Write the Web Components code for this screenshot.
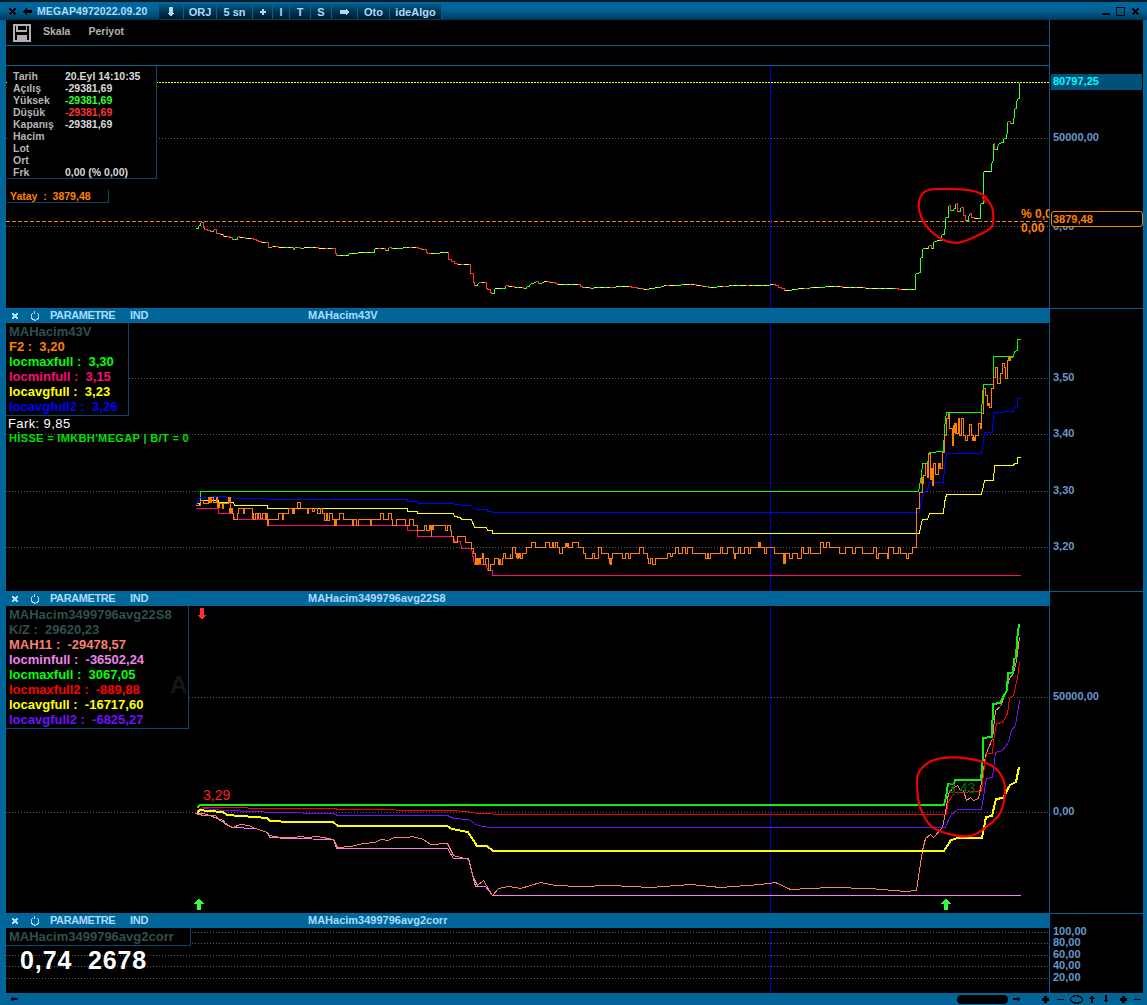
<!DOCTYPE html>
<html lang="tr"><head><meta charset="utf-8"><title>MEGAP</title>
<style>html,body{margin:0;padding:0;background:#000}</style></head>
<body>
<app-window>
  <win-titlebar slot="title" label="MEGAP4972022.09.20">
    <tool-btn w="25"><ui-icon name="down" size="10"></ui-icon></tool-btn>
    <tool-btn w="33">ORJ</tool-btn>
    <tool-btn w="36">5 sn</tool-btn>
    <tool-btn w="20"><ui-icon name="plus" size="8"></ui-icon></tool-btn>
    <tool-btn w="17">I</tool-btn>
    <tool-btn w="21">T</tool-btn>
    <tool-btn w="21">S</tool-btn>
    <tool-btn w="26"><ui-icon name="right" size="10"></ui-icon></tool-btn>
    <tool-btn w="32">Oto</tool-btn>
    <tool-btn w="52">ideAlgo</tool-btn>
  </win-titlebar>

  <chart-pane h="288" first>
    <pane-toolbar slot="head"></pane-toolbar>
    <chart-plot name="p1" view="6 66 1043 242"></chart-plot>
    <ohlc-box>
      <span>Tarih</span><span>20.Eyl 14:10:35</span>
      <span>Açılış</span><span>-29381,69</span>
      <span>Yüksek</span><span style="color:#33ff33">-29381,69</span>
      <span>Düşük</span><span style="color:#ff3333">-29381,69</span>
      <span>Kapanış</span><span>-29381,69</span>
      <span>Hacim</span><span></span>
      <span>Lot</span><span></span>
      <span>Ort</span><span></span>
      <span>Frk</span><span>0,00 (% 0,00)</span>
    </ohlc-box>
    <yatay-box>Yatay  :  3879,48</yatay-box>
    <chart-note style="left:1015px;top:141px;color:#ff8000;font-size:12px;font-weight:700;width:28px;overflow:hidden">% 0,00</chart-note>
    <chart-note style="left:1015px;top:155px;color:#ff8000;font-size:12px;font-weight:700">0,00</chart-note>
    <axis-label slot="axis" style="top:110px">50000,00</axis-label>
    <axis-label slot="axis" style="top:199px">0,00</axis-label>
    <axis-label slot="axis" kind="now" style="top:54px">80797,25</axis-label>
    <axis-label slot="axis" kind="tag" style="top:191px">3879,48</axis-label>
  </chart-pane>

  <chart-pane h="283">
    <pane-header slot="head" title-text="MAHacim43V"></pane-header>
    <chart-plot name="p2" view="6 323 1043 268"></chart-plot>
    <chart-legend style="width:122px;height:92px">
      <legend-row style="color:#2f4f4f">MAHacim43V</legend-row>
      <legend-row style="color:#ff8000">F2 :  3,20</legend-row>
      <legend-row style="color:#00ff00">locmaxfull :  3,30</legend-row>
      <legend-row style="color:#ff0a78">locminfull :  3,15</legend-row>
      <legend-row style="color:#ffff00">locavgfull :  3,23</legend-row>
      <legend-row style="color:#0000ff">locavgfull2 :  3,26</legend-row>
    </chart-legend>
    <chart-note style="left:2px;top:94px;color:#fff;font-size:13px;letter-spacing:.4px">Fark: 9,85</chart-note>
    <chart-note style="left:3px;top:108px;color:#00e000;font-size:11px;font-weight:700;letter-spacing:.35px">HİSSE = IMKBH'MEGAP | B/T = 0</chart-note>
    <axis-label slot="axis" style="top:61px">3,50</axis-label>
    <axis-label slot="axis" style="top:117px">3,40</axis-label>
    <axis-label slot="axis" style="top:174px">3,30</axis-label>
    <axis-label slot="axis" style="top:230px">3,20</axis-label>
  </chart-pane>

  <chart-pane h="322">
    <pane-header slot="head" title-text="MAHacim3499796avg22S8"></pane-header>
    <chart-plot name="p3" view="6 606 1043 307"></chart-plot>
    <chart-legend style="width:182px;height:122px">
      <legend-row style="color:#2f4f4f">MAHacim3499796avg22S8</legend-row>
      <legend-row style="color:#2f4f4f">K/Z :  29620,23</legend-row>
      <legend-row style="color:#fa8072">MAH11 :  -29478,57</legend-row>
      <legend-row style="color:#ee82ee">locminfull :  -36502,24</legend-row>
      <legend-row style="color:#00ff00">locmaxfull :  3067,05</legend-row>
      <legend-row style="color:#ff0000">locmaxfull2 :  -889,88</legend-row>
      <legend-row style="color:#ffff00">locavgfull :  -16717,60</legend-row>
      <legend-row style="color:#7010ff">locavgfull2 :  -6825,27</legend-row>
    </chart-legend>
    <chart-note style="left:164px;top:72px;color:#161616;font-size:24px;font-weight:700">A</chart-note>
    <chart-note style="left:197px;top:182px;color:#ff2020;font-size:14px">3,29</chart-note>
    <chart-note style="left:942px;top:175px;color:#007000;font-size:14px">3,43</chart-note>
    <chart-note style="left:190px;top:2px;color:#ff3030"><ui-icon name="down" size="12"></ui-icon></chart-note>
    <chart-note style="left:187px;top:292px;color:#33ff44"><ui-icon name="up" size="12"></ui-icon></chart-note>
    <chart-note style="left:934px;top:292px;color:#33ff44"><ui-icon name="up" size="12"></ui-icon></chart-note>
    <axis-label slot="axis" style="top:97px">50000,00</axis-label>
    <axis-label slot="axis" style="top:212px">0,00</axis-label>
  </chart-pane>

  <chart-pane h="80">
    <pane-header slot="head" title-text="MAHacim3499796avg2corr"></pane-header>
    <chart-plot name="p4" view="6 928 1043 65"></chart-plot>
    <chart-legend style="width:184px;height:17px">
      <legend-row style="color:#2f4f4f">MAHacim3499796avg2corr</legend-row>
    </chart-legend>
    <chart-note style="left:14px;top:18px;color:#fff;font-size:25px;font-weight:700;line-height:28px;letter-spacing:.9px">0,74  2678</chart-note>
    <axis-label slot="axis" style="top:10px">100,00</axis-label>
    <axis-label slot="axis" style="top:21px">80,00</axis-label>
    <axis-label slot="axis" style="top:33px">60,00</axis-label>
    <axis-label slot="axis" style="top:44px">40,00</axis-label>
    <axis-label slot="axis" style="top:56px">20,00</axis-label>
  </chart-pane>

  <status-bar slot="status"></status-bar>
</app-window>

<script>
const FONT = '"Liberation Sans",Arial,sans-serif';
const ICONS = {
  x:'<path d="M2 2 10 10M10 2 2 10" stroke="currentColor" stroke-width="2.6" fill="none"/>',
  left:'<path d="M0 6 5 1.5V4H12V8H5V10.5Z" fill="currentColor"/>',
  right:'<path d="M12 6 7 1.5V4H0V8H7V10.5Z" fill="currentColor"/>',
  down:'<path d="M6 12 1.5 7H4V0H8V7H10.5Z" fill="currentColor"/>',
  up:'<path d="M6 0 1 5.5H4V12H8V5.5H11Z" fill="currentColor"/>',
  plus:'<path d="M6 1V11M1 6H11" stroke="currentColor" stroke-width="3" fill="none"/>',
  minus:'<path d="M1 6H11" stroke="currentColor" stroke-width="2.4" fill="none"/>',
  refresh:'<path d="M4.2 2.2A4.6 4.6 0 1 0 8 2.2M5 .6 5.6 3.4" stroke="currentColor" stroke-width="1.3" fill="none"/>',
  min:'<path d="M0 10.5H12" stroke="currentColor" stroke-width="2.6" fill="none"/>',
  max:'<path d="M.7 .7H11.3V11.3H.7Z" stroke="currentColor" stroke-width="1.4" fill="none"/>',
  oval:'<ellipse cx="6" cy="6" rx="5.4" ry="3.4" stroke="currentColor" stroke-width="1.1" fill="none"/>',
  save:'<path d="M.6.6H11.4V11.4H.6Z" fill="none" stroke="currentColor" stroke-width="1.1"/><path d="M2.6.6V4.6H9V.6" fill="none" stroke="currentColor" stroke-width="1"/><path d="M2.6 7H9.4V11H2.6Z" fill="currentColor"/>',
};
function def(tag, css, html, init){
  customElements.define(tag, class extends HTMLElement{
    constructor(){super();this.attachShadow({mode:'open'}).innerHTML='<style>'+css+'</style>'+html;}
    connectedCallback(){init&&init(this,this.shadowRoot);}
  });
}
def('ui-icon',':host{display:inline-flex;line-height:0}svg{display:block}','<svg viewBox="0 0 12 12" shape-rendering="crispEdges"></svg>',(h,s)=>{
  const n=+h.getAttribute('size')||12,v=s.querySelector('svg');
  v.setAttribute('width',n);v.setAttribute('height',n);v.innerHTML=ICONS[h.getAttribute('name')];
});
def('app-window',
 `:host{display:flex;flex-direction:column;width:1147px;height:1005px;background:#006699;font-family:${FONT};overflow:hidden}
  .body{display:flex;flex-direction:column;padding:0 4px 0 6px}`,
 '<slot name="title"></slot><div class="body"><slot></slot></div><slot name="status"></slot>');
def('win-titlebar',
 `:host{display:flex;align-items:stretch;height:20px;box-sizing:border-box;border-top:2px solid #001a2a;padding-left:8px;color:#000;
    background:linear-gradient(#00679c,#006396 45%,#00385a)}
  .ic{display:flex;align-items:center;gap:6px;width:29px;flex:none}
  .t{width:122px;flex:none;font:700 10.5px/16px ${FONT};color:#a8dcff;letter-spacing:.1px;display:flex;align-items:center}
  .bs{display:flex;margin-top:2px;height:15px}
  .r{margin-left:auto;display:flex;align-items:center;gap:6px;padding-right:7px}`,
 `<div class="ic"><ui-icon name="x" size="9"></ui-icon><ui-icon name="left" size="9"></ui-icon></div>
  <div class="t"></div><div class="bs"><slot></slot></div>
  <div class="r"><ui-icon name="min" size="8"></ui-icon><ui-icon name="max" size="9"></ui-icon><ui-icon name="x" size="9"></ui-icon></div>`,
 (h,s)=>{s.querySelector('.t').textContent=h.getAttribute('label');});
def('tool-btn',
 `:host{display:flex;align-items:center;justify-content:center;box-sizing:border-box;flex:none;color:#a8dcff;
    font:700 11px/14px ${FONT};border-right:1px solid #00608f;background:linear-gradient(#005a88,#00263c 75%,#001c2c)}`,
 '<slot></slot>',(h)=>{h.style.width=h.getAttribute('w')+'px';});
def('chart-pane',
 `:host{display:grid;grid-template-columns:1043px 94px;background:#000}
  .m{display:flex;flex-direction:column;min-height:0}
  .p{position:relative;flex:1;min-height:0;overflow:hidden;background:#000}
  .a{position:relative;border-left:1px solid #00608f;border-top:1px solid #00608f;overflow:hidden}
  :host([first]) .a{border-top:0}`,
 '<div class="m"><slot name="head"></slot><div class="p"><slot></slot></div></div><div class="a"><slot name="axis"></slot></div>',
 (h)=>{h.style.height=h.getAttribute('h')+'px';});
def('pane-toolbar',
 `:host{display:block;color:#b0b0b0;font:700 10.5px/14px ${FONT}}
  .r1{height:25px;display:flex;align-items:center;border-bottom:1px solid #00608f;padding-left:7px}
  .r1 span{position:relative;top:-2px;margin-left:12px;margin-right:6px}
  .r2{height:19px;border-bottom:1px solid #00608f}`,
 '<div class="r1"><ui-icon name="save" size="18"></ui-icon><span>Skala</span><span>Periyot</span></div><div class="r2"></div>');
def('pane-header',
 `:host{display:flex;align-items:center;height:15px;background:#006699;color:#a8dcff;font:700 11px/15px ${FONT}}
  .x{margin-left:5px;width:19px;display:flex}.o{width:20px;display:flex}
  .a{width:80px;letter-spacing:-.4px}.b{width:178px;letter-spacing:-.3px}`,
 `<div class="x"><ui-icon name="x" size="8"></ui-icon></div><div class="o"><ui-icon name="refresh" size="10"></ui-icon></div>
  <div class="a">PARAMETRE</div><div class="b">IND</div><div class="t"></div>`,
 (h,s)=>{s.querySelector('.t').textContent=h.getAttribute('title-text');});
def('chart-legend',
 `:host{position:absolute;left:0;top:0;box-sizing:content-box;background:#000;border-right:1px solid #004a6e;border-bottom:1px solid #004a6e;display:flex;flex-direction:column}
  slot{display:block}`,'<slot></slot>');
def('legend-row',
 `:host{display:block;height:15px;padding-left:3px;font:700 13px/17px ${FONT};white-space:pre}`,'<slot></slot>');
def('chart-note',
 `:host{position:absolute;white-space:pre;font-family:${FONT};line-height:14px;z-index:2}`,'<slot></slot>');
def('ohlc-box',
 `:host{position:absolute;left:1px;top:0;width:150px;height:113px;box-sizing:border-box;background:#000;
    border-right:1px solid #004a6e;border-bottom:1px solid #004a6e;padding:4px 0 0 6px;
    display:grid;grid-template-columns:52px 1fr;grid-auto-rows:12px;color:#b4b4b4;font:700 10.5px/12px ${FONT};z-index:1}
  ::slotted(span:nth-child(even)){color:#d8d8d8}`,'<slot></slot>');
def('yatay-box',
 `:host{position:absolute;left:1px;top:124px;width:102px;height:13px;box-sizing:border-box;color:#ff8000;
    border-right:1px solid #004a6e;border-bottom:1px solid #004a6e;padding-left:3px;font:700 10.5px/12px ${FONT};white-space:pre;z-index:1;background:#000}`,'<slot></slot>');
def('axis-label',
 `:host{position:absolute;left:3px;right:1px;color:#6699cc;font:700 11px/14px ${FONT};white-space:pre}
  :host([kind=now]){color:#00ffff;background:#005078;height:16px;line-height:15px;left:1px;padding-left:2px}
  :host([kind=tag]){color:#ff8000;background:#000;border:1px solid #ff8000;border-radius:3px;height:14px;line-height:14px;left:1px;right:0;padding-left:1px}`,'<slot></slot>');
def('status-bar',
 `:host{display:flex;align-items:center;height:12px;background:#006699;color:#000;padding-left:10px}
  .g{margin-left:auto;display:flex;align-items:center}
  .pill{width:51px;height:9px;border-radius:5px;background:#000;margin-right:5px}`,
 `<ui-icon name="left" size="8"></ui-icon><div class="g"><div class="pill"></div>
  <ui-icon name="right" size="8" style="margin-right:20px"></ui-icon>
  <ui-icon name="plus" size="9" style="margin-right:6px"></ui-icon>
  <ui-icon name="minus" size="9" style="margin-right:5px"></ui-icon>
  <ui-icon name="oval" size="13" style="margin-right:5px"></ui-icon>
  <ui-icon name="up" size="8" style="margin-right:6px"></ui-icon>
  <ui-icon name="down" size="8" style="margin-right:9px"></ui-icon>
  <ui-icon name="plus" size="9" style="margin-right:5px"></ui-icon>
  <ui-icon name="minus" size="9" style="margin-right:5px"></ui-icon></div>`);

/* ---- chart data: coordinates read from zoomed crops (origin + value/3) ---- */
const Z=(s,ox,oy)=>s.trim().split(/\s+/).map(p=>{const[a,b]=p.split(',').map(Number);return[ox+a/3,oy+b/3];});
const R=s=>Z(s,0,0).map(([a,b])=>[a*3,b*3]);
const px=v=>Math.round(v)+.5;
const poly=(pts,c,w)=>{const f=(w||1)%2?px:Math.round;return`<path d="M${pts.map(([x,y])=>f(x)+' '+f(y)).join('L')}" fill="none" stroke="${c}" stroke-width="${w||1}"/>`;};
const stepd=(pts,c,w)=>{let d='M'+px(pts[0][0])+' '+px(pts[0][1]);for(let i=1;i<pts.length;i++)d+='H'+px(pts[i][0])+'V'+px(pts[i][1]);return`<path d="${d}" fill="none" stroke="${c}" stroke-width="${w||1}"/>`;};
const grid=(ys,x0,c,dash)=>ys.map(y=>`<path d="M${x0} ${y+.5}H1049" stroke="${c||'#5a5a5a'}" stroke-dasharray="${dash||'1 2'}"/>`).join('');
const vline=(a,b)=>`<path d="M770.5 ${a}V${b}" stroke="#0000d0"/>`;
const blocks=(s,ox,oy,c)=>s.trim().split(/\s+/).map(b=>{const[x1,y1,x2,y2]=b.split(',').map(Number);return`<rect x="${Math.round(ox+x1/3)}" y="${Math.round(oy+y1/3)}" width="${Math.max(1,Math.round((x2-x1)/3))}" height="${Math.max(1,Math.round((y2-y1)/3))}" fill="${c}"/>`;}).join('');
function smooth(pts,c,w){let d=`M${pts[0][0]} ${pts[0][1]}`;const n=pts.length;for(let i=0;i<n;i++){const p0=pts[(i-1+n)%n],p1=pts[i],p2=pts[(i+1)%n],p3=pts[(i+2)%n];
  d+=`C${p1[0]+(p2[0]-p0[0])/6} ${p1[1]+(p2[1]-p0[1])/6} ${p2[0]-(p3[0]-p1[0])/6} ${p2[1]-(p3[1]-p1[1])/6} ${p2[0]} ${p2[1]}`;}
  return`<path d="${d}" fill="none" stroke="${c}" stroke-width="${w}"/>`;}
function priceLine(pts){
  const seg={g:'',y:'',r:''};let n=0,X=Math.round(pts[0][0]),Y=Math.round(pts[0][1]);
  for(let i=1;i<pts.length;i++){const[a,b]=pts[i-1],[c,d]=pts[i];const st=Math.max(2,Math.min(3,Math.round(c-a)));
    for(let x=a+st;x<=c+.01||x-st<c;x+=st){const nx=Math.round(Math.min(x,c)),ny=Math.round(b+(d-b)*(Math.min(x,c)-a)/Math.max(.01,c-a));
      if(nx===X&&ny===Y)continue;n++;
      const k=ny<Y?'g':ny>Y?'r':(n*7%5<3?'y':(n%4==0?'r':'g'));
      seg[k]+=`M${X+.5} ${Y+.5}H${nx+.5}V${ny+.5}`;X=nx;Y=ny;if(x>=c)break;}}
  return`<path d="${seg.g}" stroke="#33ff33" fill="none"/><path d="${seg.y}" stroke="#ffff33" fill="none"/><path d="${seg.r}" stroke="#ff3333" fill="none"/>`;
}
const price=[...Z('15,40 30,22 42,42 60,48 70,42 80,55 97,57 100,64 120,65 125,72 135,72 142,62 148,67 170,68 190,72 205,78 225,82 233,95 245,92 265,97 305,97 310,102 312,95 330,98 375,95 385,100 425,100 438,120 470,120 475,115 500,112 545,112 553,100 580,100 585,105 595,95 610,100 640,97 655,95 675,97 700,102 712,113 770,112 775,132 800,147 835,147 840,175 852,210 865,202 880,200 890,222 903,235 913,220 935,220 945,211 975,216 1000,218 1020,205 1035,199 1045,204 1060,199 1085,200 1100,206 1160,207 1175,216 1200,218',190,215),
 ...R('600,287 625,286 645,289 665,285 690,284 710,287 730,285 760,285 772,284 785,290 800,288 830,286 850,287 880,288 913,289'),
 ...Z('165,820 175,815 180,770 187,745 200,745 205,735 215,745 220,722 235,720 252,685 255,650 265,615 270,630 278,625 285,610 290,632 300,622 315,660 327,640 332,652 350,653 360,610 368,585 370,512 388,514 395,480 400,430 403,447 415,430 420,425 438,400 442,362 450,370 458,352 463,325 470,295 476,245',860,0)];
const oA=Z('85,70 97,85 100,70 115,52 120,85 125,100 130,118 140,100 145,85 160,100 163,85 185,100 190,118 195,100 200,115 205,100 210,115 215,100 225,118 228,100 232,136 235,118 262,118 265,100 275,118 278,100 290,100 293,85 305,100 312,85 322,67 330,85 350,100 355,85 365,92 372,85 380,100 390,85 395,100 403,120 407,100 412,120 418,100 425,118 432,136 438,118 447,100 458,118 485,136 490,118 497,136 503,118 540,136 543,118 570,100 580,118 595,100 603,118 607,136 617,118 645,136 657,118 668,135 680,150 702,135 708,150 717,135 722,168 724,135 760,135 765,150 770,135 780,150 783,168 790,185 800,168 813,168 825,185 835,185 843,203 850,220 855,252 860,235 875,220 880,252 885,235 895,270 900,252 905,252 913,235 925,252 937,235 940,220 945,235 960,220',190,480);
const oB=Z('0,100 5,67 15,85 20,100 25,85 30,100 37,85 48,67 62,50 75,67 105,50 118,67 125,50 130,67 135,50 140,67 147,85 155,67 165,55 175,67 186,50 205,67 218,85 225,100 245,85 252,100 265,67 272,85 295,100 300,118 303,100 307,85 335,100 345,85 355,100 360,85 388,67 400,85 410,100 415,115 420,100 425,118 435,100 470,85 480,92 487,85 495,67 505,85 515,67 525,85 530,67 547,85 585,100 590,85 595,100 600,85 630,67 636,85 650,67 668,85 672,100 676,85 685,67 690,85 703,67 715,85 720,67 745,50 750,67 763,85 767,67 792,85 820,115 825,85 838,100 845,85 862,100 872,67 880,85 893,67 900,85 930,50 940,67 947,50 957,67 988,85 1005,67 1025,85 1035,67 1055,85 1090,67 1098,100 1105,85 1130,100 1135,67 1150,85 1163,67 1170,85 1187,100 1195,85 1205,67 1216,67',510,525);
const oC=Z('108,565 118,515 125,490 130,465 135,430 140,470 145,400 150,470 155,495 160,430 165,462 175,430 180,445 187,395 193,345 197,295 205,280 207,325 215,375 218,315 225,340 233,295 238,345 243,295 250,345 255,360 262,345 267,312 272,345 278,360 285,345 295,310 300,325 302,280 310,205 315,225 320,250 327,260 333,205 340,170 345,140 352,190 360,160 365,128 372,142 375,175 380,120 385,110 395,110',880,320);
const PLOTS={
 p1:()=>grid([138,226],6)+grid([82],6,'#ffff00','2 1')+`<path d="M6 221.5H1049" stroke="#ff8000" stroke-dasharray="4 2"/>`+vline(66,308)+priceLine(price)
   +`<g shape-rendering="auto">`+smooth(Z('365,582 325,570 230,567 195,575 178,600 180,640 205,685 250,720 295,728 345,710 395,680 398,630 385,603',860,0),'#f00000',2.2)+poly(Z('365,590 378,610',860,0),'#f00000',2)+`</g>`,
 p2:()=>grid([378,434,491,547],6)+vline(323,591)
   +poly([...Z('15,68 30,68 30,33',190,480),[918,491],...Z('122,465 127,430 140,428 147,395 190,393 193,325 197,277 303,277 306,228 310,193 338,193 340,108 400,108 401,92 410,90 410,58 420,58',880,320)],'#00ff00')
   +poly([...Z('15,75 28,50 85,47 130,50 132,55 230,55 232,58 650,58 652,64 680,64 682,69 790,69 792,72 810,72 812,76 840,76 852,87 890,88 892,92 905,92 905,97',190,480),...Z('118,577 122,540 128,515 140,510 147,487 190,487 193,437 197,400 303,400 308,360 312,337 337,337 340,275 400,273 401,258 410,258 410,235 420,235',880,320)],'#0000ff')
   +poly([...Z('15,75 28,75 30,60 85,60 85,67 130,67 132,76 230,76 232,85 650,85 652,92 680,92 682,99 790,99 792,108 810,110 812,118 842,118 852,141 888,142 890,150 905,150 905,160',190,480),...Z('118,640 120,617 127,598 140,597 147,580 190,580 193,547 197,523 303,523 308,497 312,481 338,481 342,436 400,436 403,430 410,430 410,412 420,412',880,320)],'#ffff00')
   +poly([...Z('15,85 85,85 85,100 130,100 132,118 230,118 232,136 650,136 652,151 682,151 682,169 790,169 792,184 810,184 812,203 842,203 853,253 888,253 890,271 905,271 905,286',190,480),...Z('420,766',880,320)],'#ff0a78')
   +stepd([[195,505],[200,500],[203,503],[208,497],[209,502],[211,497],[213,502],[216,497],[217,502],...oA,...oB,...oC],'#ff8000')
   +blocks('55,50,67,67 82,70,92,85 115,50,120,67 118,85,126,100 187,100,193,118 305,88,311,100 432,118,438,136 720,136,732,152 858,235,872,252 925,237,935,252 978,220,990,235',190,480,'#ff8000')
   +blocks('165,55,175,67 298,103,303,118 820,85,825,115 745,50,750,67',510,525,'#ff8000')
   +blocks('275,350,285,362 320,250,330,260 388,112,395,125 222,310,230,340 175,430,185,448 122,470,128,490 150,445,158,480',880,320,'#ff8000'),
 p3:()=>grid([697,812],6)+vline(606,913)
   +poly([...Z('15,100 40,100 100,120 105,132 125,142 195,145 230,155 237,170 300,175 430,177 437,203 770,203 790,233 835,235 855,318 885,318 905,346',190,780),[1020,895]],'#ee82ee')
   +poly([...Z('15,100 40,105 75,105 85,118 105,128 125,140 150,132 175,135 195,145 230,155 237,165 270,172 310,172 330,168 350,170 380,168 430,178 440,200 480,198 520,188 555,185 570,177 595,180 610,170 650,172 665,168 700,176 720,192 770,190 790,225 835,238 850,290 860,315 880,300 905,345 925,325 955,317 990,325',190,780),
      ...R('520,888 540,882 555,885 580,886 610,885 650,887 690,884 720,887 760,884 775,882 790,889 830,887 870,888 905,891 916,890'),
      ...Z('112,850 125,750 135,715 150,702 160,712 185,680 195,635 205,580 215,565 230,555 240,570 250,570 258,600 270,590 280,600 295,595 305,530 315,465 335,415 345,330 360,318 375,280 388,235 400,220 408,180 418,110',880,600)],'#fa8072')
   +poly([...Z('20,95 40,85 100,90 200,92 240,97 430,100 440,106 770,106 790,113 835,116 860,135 900,140',190,780),...Z('0,682 195,682 210,645 230,628 303,628 312,570 318,535 335,532 345,455 365,450 385,425 392,390 405,375 412,340 418,300',880,600)],'#7010ff')
   +poly([...Z('20,90 35,80 105,80 108,82 235,84 435,85 440,88 790,90 850,95 858,100 905,100 908,103',190,780),...Z('0,643 197,643 200,610 215,585 225,575 302,573 310,520 318,460 335,458 340,420 348,370 365,365 380,340 388,295 400,285 410,230 418,185',880,600)],'#ff0000')
   +poly([...Z('20,98 30,90 55,92 100,95 110,105 195,110 230,115 240,122 305,125 430,125 443,138 770,138 785,148 835,155 860,197 890,197 910,212',190,780),...Z('0,752 192,752 212,720 235,713 305,713 318,650 337,648 347,597 370,595 390,555 408,545 418,500',880,600)],'#ffff00',2)
   +poly([...Z('20,85 30,75',190,780),...Z('0,615 192,615 197,590 205,552 222,552 225,540 303,540 308,470 310,415 335,412 340,312 360,308 380,270 385,220 400,218 403,178 408,175 412,120 417,72',880,600)],'#11ee11',2)
   +`<g shape-rendering="auto">`+smooth(Z('115,520 150,485 200,473 260,475 320,490 360,520 375,570 360,640 320,680 270,708 200,700 150,675 120,620 112,570',880,600),'#f00000',2.2)+`</g>`,
 p4:()=>grid([932,943,955,966,978],6)+vline(928,993),
};
def('chart-plot',':host{position:absolute;inset:0;display:block}svg{display:block;width:100%;height:100%}',
 '<svg shape-rendering="crispEdges" xmlns="http://www.w3.org/2000/svg"></svg>',(h,s)=>{
  const v=s.querySelector('svg');v.setAttribute('viewBox',h.getAttribute('view'));v.innerHTML=PLOTS[h.getAttribute('name')]();
 });
</script>
</body></html>
